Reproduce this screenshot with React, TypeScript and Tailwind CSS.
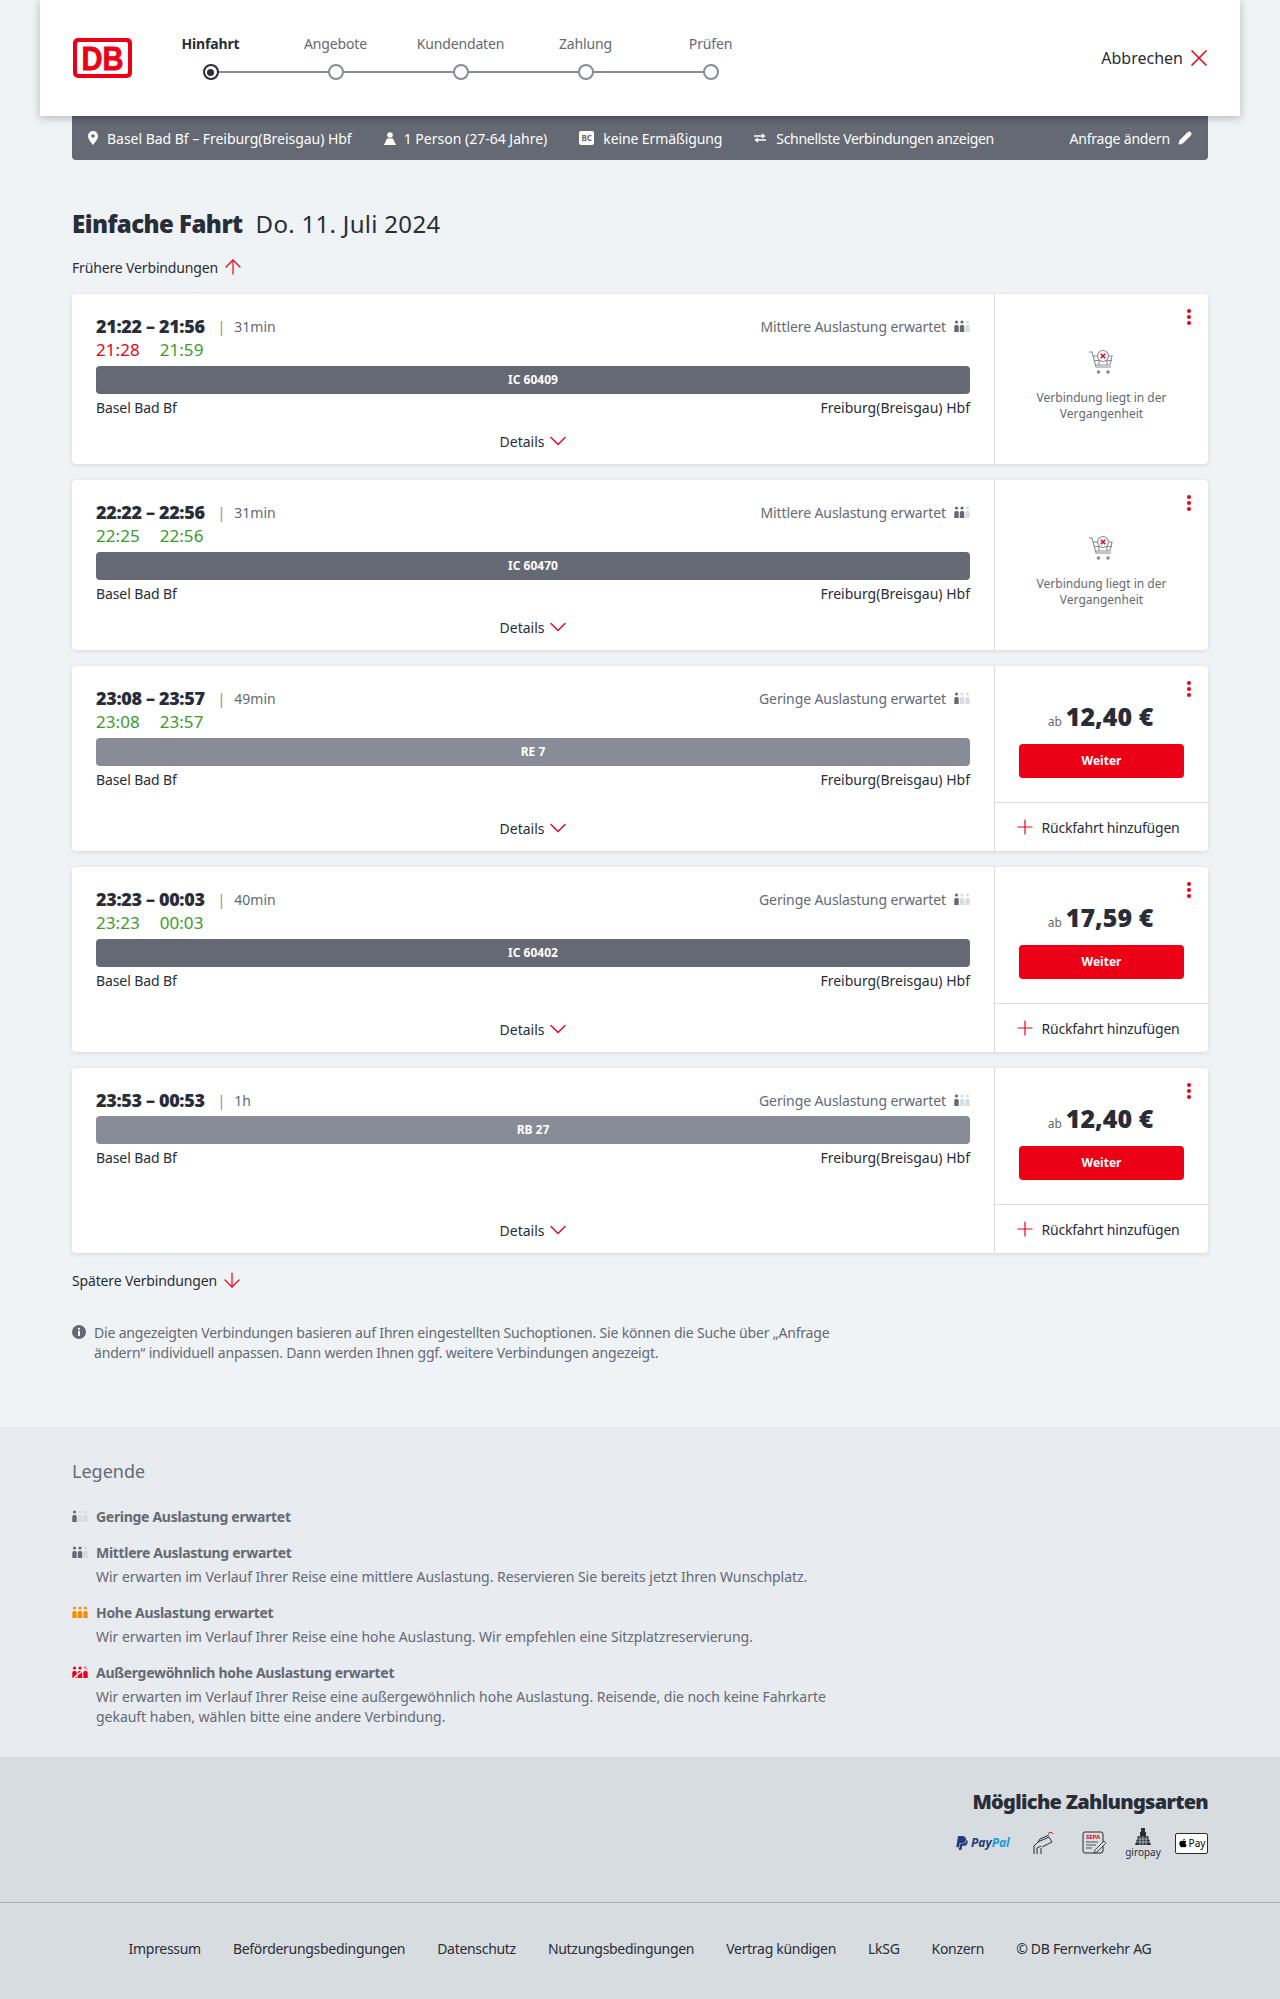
import { ArrowDown, ArrowUp, ChevronDown, Pencil, Plus } from 'lucide-react';
import { FaApple } from 'react-icons/fa';
import { SiPaypal } from 'react-icons/si';

type Connection = {
  time: string;
  duration: string;
  occupancy: 'Mittlere' | 'Geringe';
  actual?: { dep: string; arr: string; late?: boolean };
  train: string;
  trainDark: boolean;
  price?: string;
};

const connections: Connection[] = [
  { time: '21:22 – 21:56', duration: '31min', occupancy: 'Mittlere', actual: { dep: '21:28', arr: '21:59', late: true }, train: 'IC 60409', trainDark: true },
  { time: '22:22 – 22:56', duration: '31min', occupancy: 'Mittlere', actual: { dep: '22:25', arr: '22:56' }, train: 'IC 60470', trainDark: true },
  { time: '23:08 – 23:57', duration: '49min', occupancy: 'Geringe', actual: { dep: '23:08', arr: '23:57' }, train: 'RE 7', trainDark: false, price: '12,40 €' },
  { time: '23:23 – 00:03', duration: '40min', occupancy: 'Geringe', actual: { dep: '23:23', arr: '00:03' }, train: 'IC 60402', trainDark: true, price: '17,59 €' },
  { time: '23:53 – 00:53', duration: '1h', occupancy: 'Geringe', train: 'RB 27', trainDark: false, price: '12,40 €' },
];

const steps = ['Hinfahrt', 'Angebote', 'Kundendaten', 'Zahlung', 'Prüfen'];

const footerLinks = ['Impressum', 'Beförderungsbedingungen', 'Datenschutz', 'Nutzungsbedingungen', 'Vertrag kündigen', 'LkSG', 'Konzern', '© DB Fernverkehr AG'];

function DbLogo() {
  return (
    <svg width="59" height="40" viewBox="0 0 59 40">
      <rect width="59" height="40" rx="5" fill="#ec0016" />
      <rect x="4" y="4" width="51" height="32" rx="2" fill="#fff" />
      <text x="29.500" y="32" textAnchor="middle" fontFamily="'Liberation Sans', sans-serif" fontWeight="700" fontSize="34" fill="#ec0016" stroke="#ec0016" strokeWidth="0.8" textLength="42" lengthAdjust="spacingAndGlyphs">DB</text>
    </svg>
  );
}

function Occupancy({ filled, color = '#646973', slash = false }: { filled: number; color?: string; slash?: boolean }) {
  return (
    <svg width="16" height="13" viewBox="0 0 16 13">
      {[0, 1, 2].map((i) => (
        <g key={i} fill={i < filled ? color : '#d7dce1'}>
          <circle cx={2.5 + i * 5.5} cy="2" r="1.6" />
          <path d={`M${0.3 + i * 5.5} 6.5a1.5 1.5 0 0 1 1.5-1.5h1.4a1.5 1.5 0 0 1 1.5 1.5V12h-4.4z`} />
        </g>
      ))}
      {slash && <path d="M1 12.5 15 1" stroke="#e8ebf0" strokeWidth="1.6" />}
    </svg>
  );
}

function Kebab() {
  return (
    <div className="absolute top-[15px] right-[17px] flex flex-col gap-[2px]">
      <span className="w-[4px] h-[4px] rounded-full bg-[#ec0016]" />
      <span className="w-[4px] h-[4px] rounded-full bg-[#ec0016]" />
      <span className="w-[4px] h-[4px] rounded-full bg-[#ec0016]" />
    </div>
  );
}

function CartCrossed() {
  return (
    <svg width="28" height="28" viewBox="0 0 28 28" fill="none" stroke="#878c96" strokeWidth="1.1">
      <path d="M1 3h3l4 15h15" />
      <path d="M5 7h5M18 7h6l-2 9H8M6 11.5h18" />
      <path d="M11 11v5M19 11v5" />
      <circle cx="15" cy="7" r="5.5" fill="#fff" />
      <path d="M12.8 4.8l4.4 4.4M17.2 4.8l-4.4 4.4" stroke="#ec0016" strokeWidth="1.5" />
      <circle cx="10.5" cy="23" r="1.8" fill="#878c96" stroke="none" />
      <circle cx="20" cy="23" r="1.8" fill="#878c96" stroke="none" />
    </svg>
  );
}

function ConnectionCard({ c }: { c: Connection }) {
  return (
    <div className="flex min-h-[170px] bg-white rounded-[4px] shadow-[0_1px_4px_rgba(40,45,55,0.14)]">
      <div className="flex-1 flex flex-col px-6 pt-5 pb-[11px] text-[14px] text-[#282d37]">
        <div className="flex items-center justify-between h-6">
          <div className="flex items-center">
            <span className="text-[18px] font-black tracking-[-0.35px]">{c.time}</span>
            <span className="ml-[13px] text-[#878c96]">|</span>
            <span className="ml-[9px] text-[#646973]">{c.duration}</span>
          </div>
          <div className="flex items-center gap-2 text-[#646973]">
            <span className="tracking-[-0.1px]">{c.occupancy} Auslastung erwartet</span>
            <Occupancy filled={c.occupancy === 'Mittlere' ? 2 : 1} />
          </div>
        </div>
        {c.actual && (
          <div className="flex gap-[20px] h-6 items-center text-[17px] tracking-[0.05px]">
            <span className={c.actual.late ? 'text-[#ec0016]' : 'text-[#3c9a2e]'}>{c.actual.dep}</span>
            <span className="text-[#3c9a2e]">{c.actual.arr}</span>
          </div>
        )}
        <div className={`mt-1 h-7 rounded-[4px] flex items-center justify-center text-[12px] font-bold text-white ${c.trainDark ? 'bg-[#646973]' : 'bg-[#878c96]'}`}>
          {c.train}
        </div>
        <div className="mt-[3px] flex justify-between h-5 items-center">
          <span className="tracking-[-0.1px]">Basel Bad Bf</span>
          <span>Freiburg(Breisgau) Hbf</span>
        </div>
        <div className="mt-auto flex items-center justify-center h-6 pl-[6px]">
          <span>Details</span>
          <ChevronDown size={28} strokeWidth={1.2} className="shrink-0 text-[#ec0016]" />
        </div>
      </div>
      <div className="relative w-[214px] border-l border-[#d7dce1] flex flex-col">
        <Kebab />
        {c.price ? (
          <>
            <div className="h-[137px] px-6 pt-[34px] border-b border-[#d7dce1]">
              <div className="flex items-baseline justify-center gap-[4px] h-8 pr-[2px]">
                <span className="text-[12px] text-[#646973]">ab</span>
                <span className="text-[25px] leading-8 font-black text-[#282d37]">{c.price}</span>
              </div>
              <div className="mt-3 h-[34px] rounded-[4px] bg-[#ec0016] text-white text-[12px] font-bold flex items-center justify-center">
                Weiter
              </div>
            </div>
            <div className="h-[48px] flex items-center justify-center gap-[4px] pr-[10px] text-[14px] text-[#282d37]">
              <Plus size={24} strokeWidth={1.2} className="shrink-0 text-[#ec0016]" />
              <span className="tracking-[-0.2px]">Rückfahrt hinzufügen</span>
            </div>
          </>
        ) : (
          <div className="flex-1 flex flex-col items-center justify-center text-center text-[12px] leading-[16px] text-[#646973] pt-[12px] px-5">
            <CartCrossed />
            <p className="mt-[13px]">
              Verbindung liegt in der
              <br />
              Vergangenheit
            </p>
          </div>
        )}
      </div>
    </div>
  );
}

function LegendItem({ filled, color, title, children }: { filled: number; color?: string; title: string; children?: React.ReactNode }) {
  return (
    <div className="flex gap-[8px]">
      <div className="pt-[5px]">
        <Occupancy filled={filled} color={color} slash={color === '#ec0016'} />
      </div>
      <div>
        <div className="font-bold h-6 leading-6 tracking-[-0.3px]">{title}</div>
        {children && <div className="leading-[20px] py-[2px] font-normal tracking-[-0.03px]">{children}</div>}
      </div>
    </div>
  );
}

function PaymentLogos() {
  return (
    <div className="flex items-center justify-end mt-[10px] h-[32px]">
      <div className="flex items-center gap-[2px] w-[56px] mr-[22px]">
        <SiPaypal size={14} className="text-[#253b80]" />
        <span className="text-[12px] font-bold italic text-[#253b80]">Pay<span className="text-[#179bd7]">Pal</span></span>
      </div>
      <svg width="22" height="24" viewBox="0 0 22 24" fill="none" stroke="#282d37" strokeWidth="1" className="mr-[27px]">
        <path d="M1 23v-8l4-4 11-5 3 5-10 5M4 23v-6l4-2M8 23v-6" />
        <path d="M5 11l2-3 9-4" />
        <path d="M15 2.500c2-1.500 4-1.500 5 .5" stroke="#ec0016" />
      </svg>
      <svg width="26" height="24" viewBox="0 0 26 24" className="mr-[18px]">
        <rect x="1" y="1" width="20" height="21" rx="2" fill="none" stroke="#282d37" />
        <text x="11" y="8" textAnchor="middle" fontSize="6" fontWeight="700" fill="#ec0016" fontFamily="'Noto Sans', sans-serif">SEPA</text>
        <path d="M4 11h12M4 14h10M4 17h6" stroke="#282d37" strokeWidth="0.8" />
        <path d="M13 19l9-9 2 2-9 9-3 1z" fill="#d7dce1" stroke="#282d37" strokeWidth="0.8" />
      </svg>
      <div className="flex flex-col items-center w-[34px] mr-[15px]">
        <svg width="16" height="18" viewBox="0 0 16 18" fill="#282d37">
          <path d="M6 0h4v4h1v4h2l3 9H0l3-9h2V4h1z" />
          <path d="M0 11h16M0 14h16M5 8v9M8 8v9M11 8v9" stroke="#d7dce1" strokeWidth="0.7" />
        </svg>
        <span className="text-[10px] leading-[12px] text-[#282d37]">giropay</span>
      </div>
      <div className="w-[33px] h-[21px] rounded-[2px] bg-white border border-[#282d37] flex items-center justify-center gap-[1px] text-[10px] text-black">
        <FaApple size={10} />
        <span>Pay</span>
      </div>
    </div>
  );
}

export default function App() {
  return (
    <div className="min-h-[1999px] bg-[#f0f3f5] font-['Noto_Sans',sans-serif] text-[#282d37]">
      {/* Header */}
      <header className="relative z-10 mx-[40px] h-[116px] bg-white shadow-[0_2px_8px_rgba(40,45,55,0.3)] flex items-center pl-[33px] pr-[33px]">
        <DbLogo />
        <div className="ml-[16px] pb-[2px] flex flex-col w-[625px]">
          <div className="flex">
            {steps.map((s, i) => (
              <div key={s} className={`w-[125px] text-center text-[14px] h-5 leading-5 tracking-[-0.15px] ${i === 0 ? 'font-bold text-[#282d37]' : 'text-[#646973]'}`}>
                {s}
              </div>
            ))}
          </div>
          <div className="relative mt-[10px] flex h-4">
            {steps.map((s, i) => (
              <div key={s} className="relative w-[125px] flex justify-center items-center">
                {i < steps.length - 1 && <span className="absolute left-1/2 w-[125px] h-[2px] bg-[#878c96]" />}
                <span className={`relative w-4 h-4 rounded-full border-2 bg-white flex items-center justify-center ${i === 0 ? 'border-[#282d37]' : 'border-[#878c96]'}`}>
                  {i === 0 && <span className="w-[7px] h-[7px] rounded-full bg-[#282d37]" />}
                </span>
              </div>
            ))}
          </div>
        </div>
        <div className="ml-auto flex items-center gap-2 text-[16px] text-[#282d37]">
          <span>Abbrechen</span>
          <svg width="16" height="16" viewBox="0 0 16 16" fill="none" stroke="#ec0016" strokeWidth="1.5">
            <path d="M0.500 0.500l15 15M15.500 0.500l-15 15" />
          </svg>
        </div>
      </header>

      {/* Search summary */}
      <div className="mx-[72px] h-[44px] bg-[#646973] rounded-b-[4px] shadow-[inset_0_6px_6px_-6px_rgba(40,45,55,0.5)] flex items-center pl-[16px] pr-[16px] text-[14px] text-white gap-[32px]">
        <div className="flex items-center gap-[9px]">
          <svg width="10" height="14" viewBox="0 0 10 14" fill="#fff">
            <path fillRule="evenodd" d="M5 0a5 5 0 0 1 5 5c0 3.5-5 9-5 9S0 8.500 0 5a5 5 0 0 1 5-5zm0 3.200a1.800 1.800 0 1 0 0 3.600 1.800 1.800 0 0 0 0-3.600z" />
          </svg>
          <span className="tracking-[-0.03px]">Basel Bad Bf – Freiburg(Breisgau) Hbf</span>
        </div>
        <div className="flex items-center gap-[8px]">
          <svg width="12" height="13" viewBox="0 0 12 13" fill="#fff">
            <circle cx="6" cy="3" r="2.800" />
            <path d="M3 6.500h6L12 13H0z" />
          </svg>
          <span>1 Person (27-64 Jahre)</span>
        </div>
        <div className="flex items-center gap-[9px]">
          <span className="w-[15px] h-[14px] rounded-[2px] bg-white text-[#646973] text-[8px] font-bold flex items-center justify-center">BC</span>
          <span className="tracking-[-0.1px]">keine Ermäßigung</span>
        </div>
        <div className="flex items-center gap-[10px]">
          <svg width="12" height="10" viewBox="0 0 12 10" fill="none" stroke="#fff" strokeWidth="1.300">
            <path d="M0 3h10M8 1l2.500 2L8 5M12 7H2M4 5 1.500 7 4 9" />
          </svg>
          <span className="tracking-[-0.3px]">Schnellste Verbindungen anzeigen</span>
        </div>
        <div className="ml-auto flex items-center gap-[8px]">
          <span className="tracking-[-0.2px]">Anfrage ändern</span>
          <Pencil size={14} fill="#fff" />
        </div>
      </div>

      {/* Results */}
      <main className="px-[72px] pt-[48px] pb-[64px]">
        <h1 className="flex items-baseline gap-[13px] h-8 leading-8 text-[24px]">
          <span className="font-black tracking-[-0.55px]">Einfache Fahrt</span>
          <span className="tracking-[0.3px]">Do. 11. Juli 2024</span>
        </h1>
        <div className="mt-[15px] h-6 flex items-center gap-[3px] text-[14px]">
          <span className="tracking-[-0.15px]">Frühere Verbindungen</span>
          <ArrowUp size={24} strokeWidth={1.2} className="shrink-0 text-[#ec0016]" />
        </div>
        <div className="mt-[15px] flex flex-col gap-4">
          {connections.map((c) => (
            <ConnectionCard key={c.time} c={c} />
          ))}
        </div>
        <div className="mt-[15px] h-6 flex items-center gap-[3px] text-[14px]">
          <span className="tracking-[-0.15px]">Spätere Verbindungen</span>
          <ArrowDown size={24} strokeWidth={1.2} className="shrink-0 text-[#ec0016]" />
        </div>
        <div className="mt-[31px] flex gap-[8px] max-w-[800px] text-[14px] leading-[20px] tracking-[-0.18px] text-[#646973]">
          <svg width="14" height="14" viewBox="0 0 14 14" className="mt-[2px] shrink-0">
            <circle cx="7" cy="7" r="7" fill="#646973" />
            <circle cx="7" cy="3.800" r="1.100" fill="#fff" />
            <rect x="6" y="5.800" width="2" height="5" fill="#fff" />
          </svg>
          <p>
            Die angezeigten Verbindungen basieren auf Ihren eingestellten Suchoptionen. Sie können die Suche über „Anfrage
            <br />
            ändern“ individuell anpassen. Dann werden Ihnen ggf. weitere Verbindungen angezeigt.
          </p>
        </div>
      </main>

      {/* Legend */}
      <section className="h-[330px] bg-[#e8ebf0] px-[72px] pt-[31px] text-[14px] text-[#646973]">
        <h2 className="text-[18px] leading-[26px]">Legende</h2>
        <div className="mt-[21px] flex flex-col gap-[12px]">
          <LegendItem filled={1} title="Geringe Auslastung erwartet" />
          <LegendItem filled={2} title="Mittlere Auslastung erwartet">
            Wir erwarten im Verlauf Ihrer Reise eine mittlere Auslastung. Reservieren Sie bereits jetzt Ihren Wunschplatz.
          </LegendItem>
          <LegendItem filled={3} color="#f39200" title="Hohe Auslastung erwartet">
            Wir erwarten im Verlauf Ihrer Reise eine hohe Auslastung. Wir empfehlen eine Sitzplatzreservierung.
          </LegendItem>
          <LegendItem filled={3} color="#ec0016" title="Außergewöhnlich hohe Auslastung erwartet">
            Wir erwarten im Verlauf Ihrer Reise eine außergewöhnlich hohe Auslastung. Reisende, die noch keine Fahrkarte
            <br />
            gekauft haben, wählen bitte eine andere Verbindung.
          </LegendItem>
        </div>
      </section>

      {/* Payment + footer */}
      <section className="h-[146px] bg-[#d7dce1] px-[72px] pt-[30px] border-b border-[#afb4bb]">
        <h2 className="text-right text-[20px] leading-[30px] font-black tracking-[-0.7px]">Mögliche Zahlungsarten</h2>
        <PaymentLogos />
      </section>
      <footer className="h-[97px] bg-[#d7dce1] flex items-start justify-center pt-[36px] gap-[32px] text-[14px] leading-[20px] tracking-[-0.3px]">
        {footerLinks.map((l) => (
          <span key={l}>{l}</span>
        ))}
      </footer>
    </div>
  );
}
